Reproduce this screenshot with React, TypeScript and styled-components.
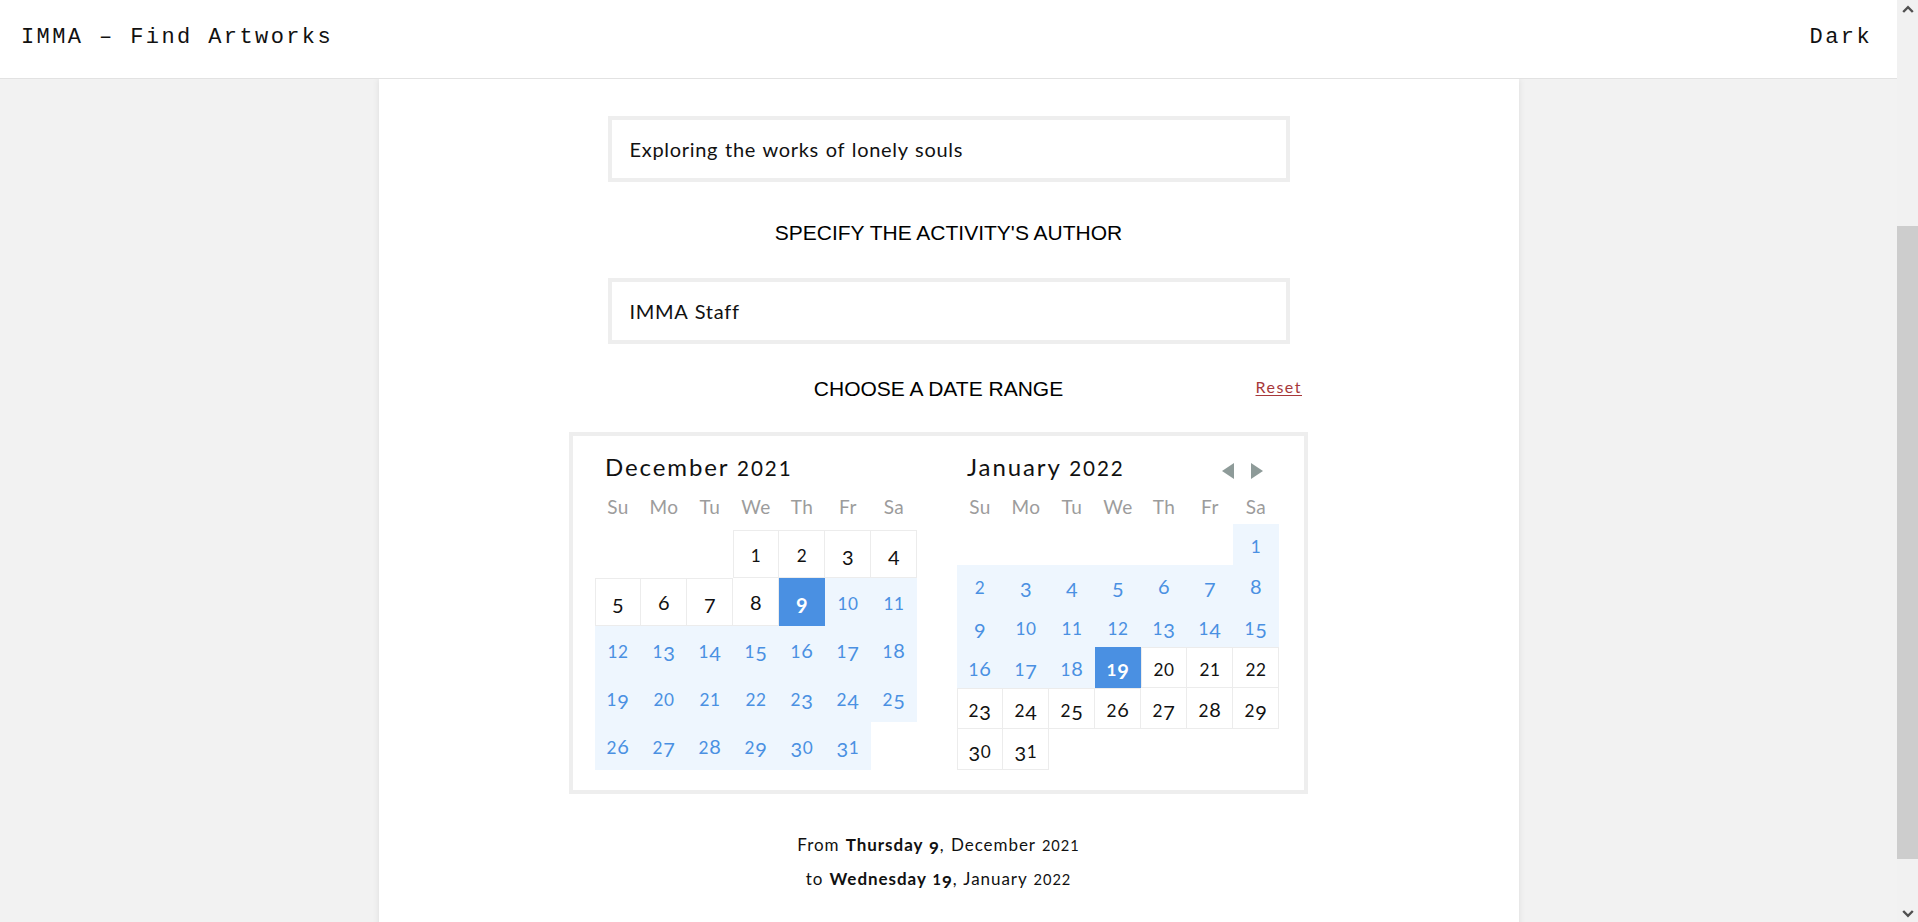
import React from 'react';
import styled, { createGlobalStyle, css } from 'styled-components';

const GlobalStyle = createGlobalStyle`
  html, body { height: 100%; }
  body {
    margin: 0;
    overflow: hidden;
    background: #f2f2f2;
    color: #111;
    font-family: Lato, "Open Sans", "Noto Sans", sans-serif;
  }
  *, *::before, *::after { box-sizing: border-box; }
`;

/* ---------- window frame ---------- */

const Shell = styled.div`
  display: flex;
  height: 922px;
  overflow: hidden;
`;

const Viewport = styled.div`
  flex: 1;
  min-width: 0;
  display: flex;
  flex-direction: column;
`;

const Scroller = styled.div`
  flex: 1;
  overflow: hidden;
`;

const ScrollRail = styled.div`
  width: 21px;
  flex: none;
  background: #f1f1f1;
  display: flex;
  flex-direction: column;
`;

const RailArrow = styled.div`
  height: 17px;
  flex: none;
  display: flex;
  align-items: center;
  justify-content: center;
  color: #505050;
  svg { display: block; }
`;

const RailTrack = styled.div`
  flex: 1;
`;

const RailThumb = styled.div`
  background: #cdcdcd;
`;

/* ---------- header ---------- */

const Header = styled.header`
  flex: none;
  height: 79px;
  background: #fff;
  border-bottom: 1px solid #e2e2e2;
  display: flex;
  align-items: center;
  justify-content: space-between;
  padding: 0 25px 3px 21px;
`;

const Brand = styled.span`
  font-family: "Liberation Mono", "DejaVu Sans Mono", monospace;
  font-size: 22px;
  letter-spacing: 2.4px;
  color: #111;
`;

const ThemeToggle = styled.button`
  font-family: "Liberation Mono", "DejaVu Sans Mono", monospace;
  font-size: 22px;
  letter-spacing: 2.4px;
  color: #111;
  background: none;
  border: 0;
  padding: 0;
  cursor: pointer;
`;

/* ---------- form panel ---------- */

const Panel = styled.main`
  width: 1140px;
  margin: 0 auto;
  background: #fff;
  box-shadow: 0 0 7px rgba(0, 0, 0, 0.09);
  padding: 37px 0 120px;
  display: flex;
  flex-direction: column;
  align-items: center;
`;

const SectionTitle = styled.h2`
  margin: 0;
  height: 24px;
  font-family: "Liberation Sans", Arial, sans-serif;
  font-size: 21px;
  line-height: 24px;
  font-weight: 400;
  color: #000;
  text-align: center;
  white-space: nowrap;
`;

const FieldTitle = styled(SectionTitle)`
  margin-top: 39px;
`;

const Field = styled.input`
  margin-top: 33px;
  width: 682px;
  height: 66px;
  border: 4px solid #eeeeee;
  padding: 0 18px;
  font-family: Lato, "Open Sans", sans-serif;
  font-size: 20px;
  letter-spacing: 0.7px;
  word-spacing: 1px;
  color: #111;
  background: #fff;
  outline: none;
  &:first-child { margin-top: 0; }
`;

const DateSection = styled.section`
  align-self: stretch;
  padding-right: 20px;
  margin-top: 33px;
  display: flex;
  flex-direction: column;
  align-items: center;
`;

const DateHeadRow = styled.div`
  width: 739px;
  height: 24px;
  display: grid;
  grid-template-columns: 1fr auto 1fr;
`;

const DateTitle = styled(SectionTitle)`
  grid-column: 2;
`;

const ResetLink = styled.a`
  grid-column: 3;
  justify-self: end;
  align-self: start;
  margin-right: 6px;
  font-size: 16px;
  line-height: 19px;
  letter-spacing: 1.5px;
  color: #a7383a;
  text-decoration: underline;
  text-underline-offset: 2px;
  cursor: pointer;
`;

/* ---------- calendar ---------- */

const CalendarBox = styled.div`
  margin-top: 31px;
  width: 739px;
  border: 4px solid #eeeeee;
  display: flex;
  gap: 40px;
  padding: 0 25px 20px 22px;
`;

const Month = styled.div`
  width: 322px;
  padding-top: 17px;
  display: flex;
  flex-direction: column;
`;

const MonthHead = styled.div`
  height: 29px;
  display: flex;
  align-items: center;
  justify-content: space-between;
  padding: 0 16px 0 10px;
`;

const MonthTitle = styled.h3`
  margin: 0;
  font-size: 24px;
  line-height: 29px;
  font-weight: 400;
  letter-spacing: 1.9px;
  color: #111;
  white-space: nowrap;
`;

const NavGroup = styled.div`
  display: flex;
  gap: 17px;
  margin-top: 7px;
`;

const NavButton = styled.button`
  width: 12px;
  height: 16px;
  padding: 0;
  border: 0;
  background: none;
  color: #8e9b99;
  display: flex;
  cursor: pointer;
  svg { display: block; }
`;

const Weekdays = styled.div`
  margin-top: 13px;
  height: 23px;
  display: grid;
  grid-template-columns: repeat(7, 46px);
  font-size: 19px;
  line-height: 23px;
  letter-spacing: 0.5px;
  color: #9c9c9c;
  text-align: center;
`;

const DaysGrid = styled.div<{ $rowHeight: number }>`
  margin-top: 6px;
  height: 246px;
  display: grid;
  grid-template-columns: repeat(7, 46px);
  grid-auto-rows: ${(p) => p.$rowHeight}px;
  align-content: end;
`;

type DayState = 'empty' | 'normal' | 'range' | 'edge';

const LINE = '#ececec';

const DayCell = styled.div<{ $state: DayState; $bt: boolean; $bl: boolean }>`
  display: flex;
  align-items: center;
  justify-content: center;
  font-size: 20px;
  letter-spacing: 0.6px;
  color: #111;
  ${({ $state, $bt, $bl }) => {
    if ($state === 'range')
      return css`
        background: #eef6fe;
        color: #4a90e2;
      `;
    if ($state === 'edge')
      return css`
        background: #4a90e2;
        color: #fff;
        font-weight: 700;
      `;
    if ($state === 'normal') {
      const shadows = [`inset -1px -1px 0 ${LINE}`];
      if ($bt) shadows.push(`inset 0 1px 0 ${LINE}`);
      if ($bl) shadows.push(`inset 1px 0 0 ${LINE}`);
      return css`
        background: #fff;
        box-shadow: ${shadows.join(', ')};
      `;
    }
    return css``;
  }}
`;

const NumText = styled.span`
  white-space: nowrap;
`;

type DigitKind = 'small' | 'desc' | 'full';

const Digit = styled.span<{ $kind: DigitKind }>`
  display: inline-block;
  ${({ $kind }) =>
    $kind === 'small'
      ? css`font-size: 0.86em;`
      : $kind === 'desc'
      ? css`transform: translateY(0.17em);`
      : css``}
`;

const digitKind = (ch: string): DigitKind =>
  '012'.includes(ch) ? 'small' : '34579'.includes(ch) ? 'desc' : 'full';

/* old-style figures, as the reference face draws them */
const OldNum = ({ value }: { value: string | number }) => (
  <>
    {String(value)
      .split('')
      .map((ch, i) =>
        /\d/.test(ch) ? (
          <Digit key={i} $kind={digitKind(ch)}>
            {ch}
          </Digit>
        ) : (
          <React.Fragment key={i}>{ch}</React.Fragment>
        )
      )}
  </>
);

const RangeSummary = styled.p`
  margin: 34px 0 0;
  font-size: 17px;
  line-height: 33px;
  letter-spacing: 0.95px;
  word-spacing: 1px;
  text-align: center;
  color: #111;
  strong { font-weight: 700; }
`;

const WEEKDAYS = ['Su', 'Mo', 'Tu', 'We', 'Th', 'Fr', 'Sa'];

interface MonthSpec {
  name: string;
  year: string;
  offset: number;
  days: number;
  rowHeight: number;
  state: (d: number) => DayState;
  nav?: boolean;
}

const MONTHS: MonthSpec[] = [
  {
    name: 'December',
    year: '2021',
    offset: 3,
    days: 31,
    rowHeight: 48,
    state: (d) => (d === 9 ? 'edge' : d > 9 ? 'range' : 'normal'),
  },
  {
    name: 'January',
    year: '2022',
    offset: 6,
    days: 31,
    rowHeight: 41,
    state: (d) => (d === 19 ? 'edge' : d < 19 ? 'range' : 'normal'),
    nav: true,
  },
];

function buildCells(m: MonthSpec) {
  const total = Math.ceil((m.offset + m.days) / 7) * 7;
  const states: DayState[] = [];
  const nums: (number | null)[] = [];
  for (let i = 0; i < total; i++) {
    const d = i - m.offset + 1;
    if (d < 1 || d > m.days) {
      states.push('empty');
      nums.push(null);
    } else {
      states.push(m.state(d));
      nums.push(d);
    }
  }
  return nums.map((n, i) => {
    const st = states[i];
    const above = i >= 7 ? states[i - 7] : 'empty';
    const left = i % 7 === 0 ? 'empty' : states[i - 1];
    return { n, st, bt: above !== 'normal', bl: left !== 'normal' };
  });
}

const Triangle = ({ dir }: { dir: 'left' | 'right' }) => (
  <svg width="12" height="16" viewBox="0 0 12 16" aria-hidden>
    <polygon points={dir === 'left' ? '12,0 12,16 0,8' : '0,0 0,16 12,8'} fill="currentColor" />
  </svg>
);

const Chevron = ({ dir }: { dir: 'up' | 'down' }) => (
  <svg width="12" height="8" viewBox="0 0 12 8" aria-hidden>
    <polyline
      points={dir === 'up' ? '1.2,7 6,2.2 10.8,7' : '1.2,1 6,5.8 10.8,1'}
      fill="none"
      stroke="currentColor"
      strokeWidth="2.4"
    />
  </svg>
);

const MonthView = ({ m }: { m: MonthSpec }) => (
  <Month>
    <MonthHead>
      <MonthTitle>
        {m.name} <OldNum value={m.year} />
      </MonthTitle>
      {m.nav && (
        <NavGroup>
          <NavButton aria-label="Previous month">
            <Triangle dir="left" />
          </NavButton>
          <NavButton aria-label="Next month">
            <Triangle dir="right" />
          </NavButton>
        </NavGroup>
      )}
    </MonthHead>
    <Weekdays>
      {WEEKDAYS.map((w) => (
        <span key={w}>{w}</span>
      ))}
    </Weekdays>
    <DaysGrid $rowHeight={m.rowHeight}>
      {buildCells(m).map((c, i) => (
        <DayCell key={i} $state={c.st} $bt={c.bt} $bl={c.bl}>
          {c.n !== null && (
            <NumText>
              <OldNum value={c.n} />
            </NumText>
          )}
        </DayCell>
      ))}
    </DaysGrid>
  </Month>
);

/* page scroll state shown by the scrollbar */
const VIEW_H = 922;
const DOC_H = 1294;
const SCROLL_TOP = 305;
const TRACK_H = VIEW_H - 34;

export default function App() {
  const thumbTop = (TRACK_H * SCROLL_TOP) / DOC_H;
  const thumbH = (TRACK_H * VIEW_H) / DOC_H;

  return (
    <>
      <GlobalStyle />
      <Shell>
        <Viewport>
          <Header>
            <Brand>IMMA – Find Artworks</Brand>
            <ThemeToggle>Dark</ThemeToggle>
          </Header>
          <Scroller>
            <Panel>
              <Field readOnly value="Exploring the works of lonely souls" />
              <FieldTitle>SPECIFY THE ACTIVITY'S AUTHOR</FieldTitle>
              <Field readOnly value="IMMA Staff" />
              <DateSection>
                <DateHeadRow>
                  <DateTitle>CHOOSE A DATE RANGE</DateTitle>
                  <ResetLink>Reset</ResetLink>
                </DateHeadRow>
                <CalendarBox>
                  {MONTHS.map((m) => (
                    <MonthView key={m.name} m={m} />
                  ))}
                </CalendarBox>
                <RangeSummary>
                  From{' '}
                  <strong>
                    Thursday <OldNum value="9" />
                  </strong>
                  , December <OldNum value="2021" />
                  <br />
                  to{' '}
                  <strong>
                    Wednesday <OldNum value="19" />
                  </strong>
                  , January <OldNum value="2022" />
                </RangeSummary>
              </DateSection>
            </Panel>
          </Scroller>
        </Viewport>
        <ScrollRail>
          <RailArrow>
            <Chevron dir="up" />
          </RailArrow>
          <RailTrack>
            <RailThumb style={{ marginTop: thumbTop, height: thumbH }} />
          </RailTrack>
          <RailArrow>
            <Chevron dir="down" />
          </RailArrow>
        </ScrollRail>
      </Shell>
    </>
  );
}
